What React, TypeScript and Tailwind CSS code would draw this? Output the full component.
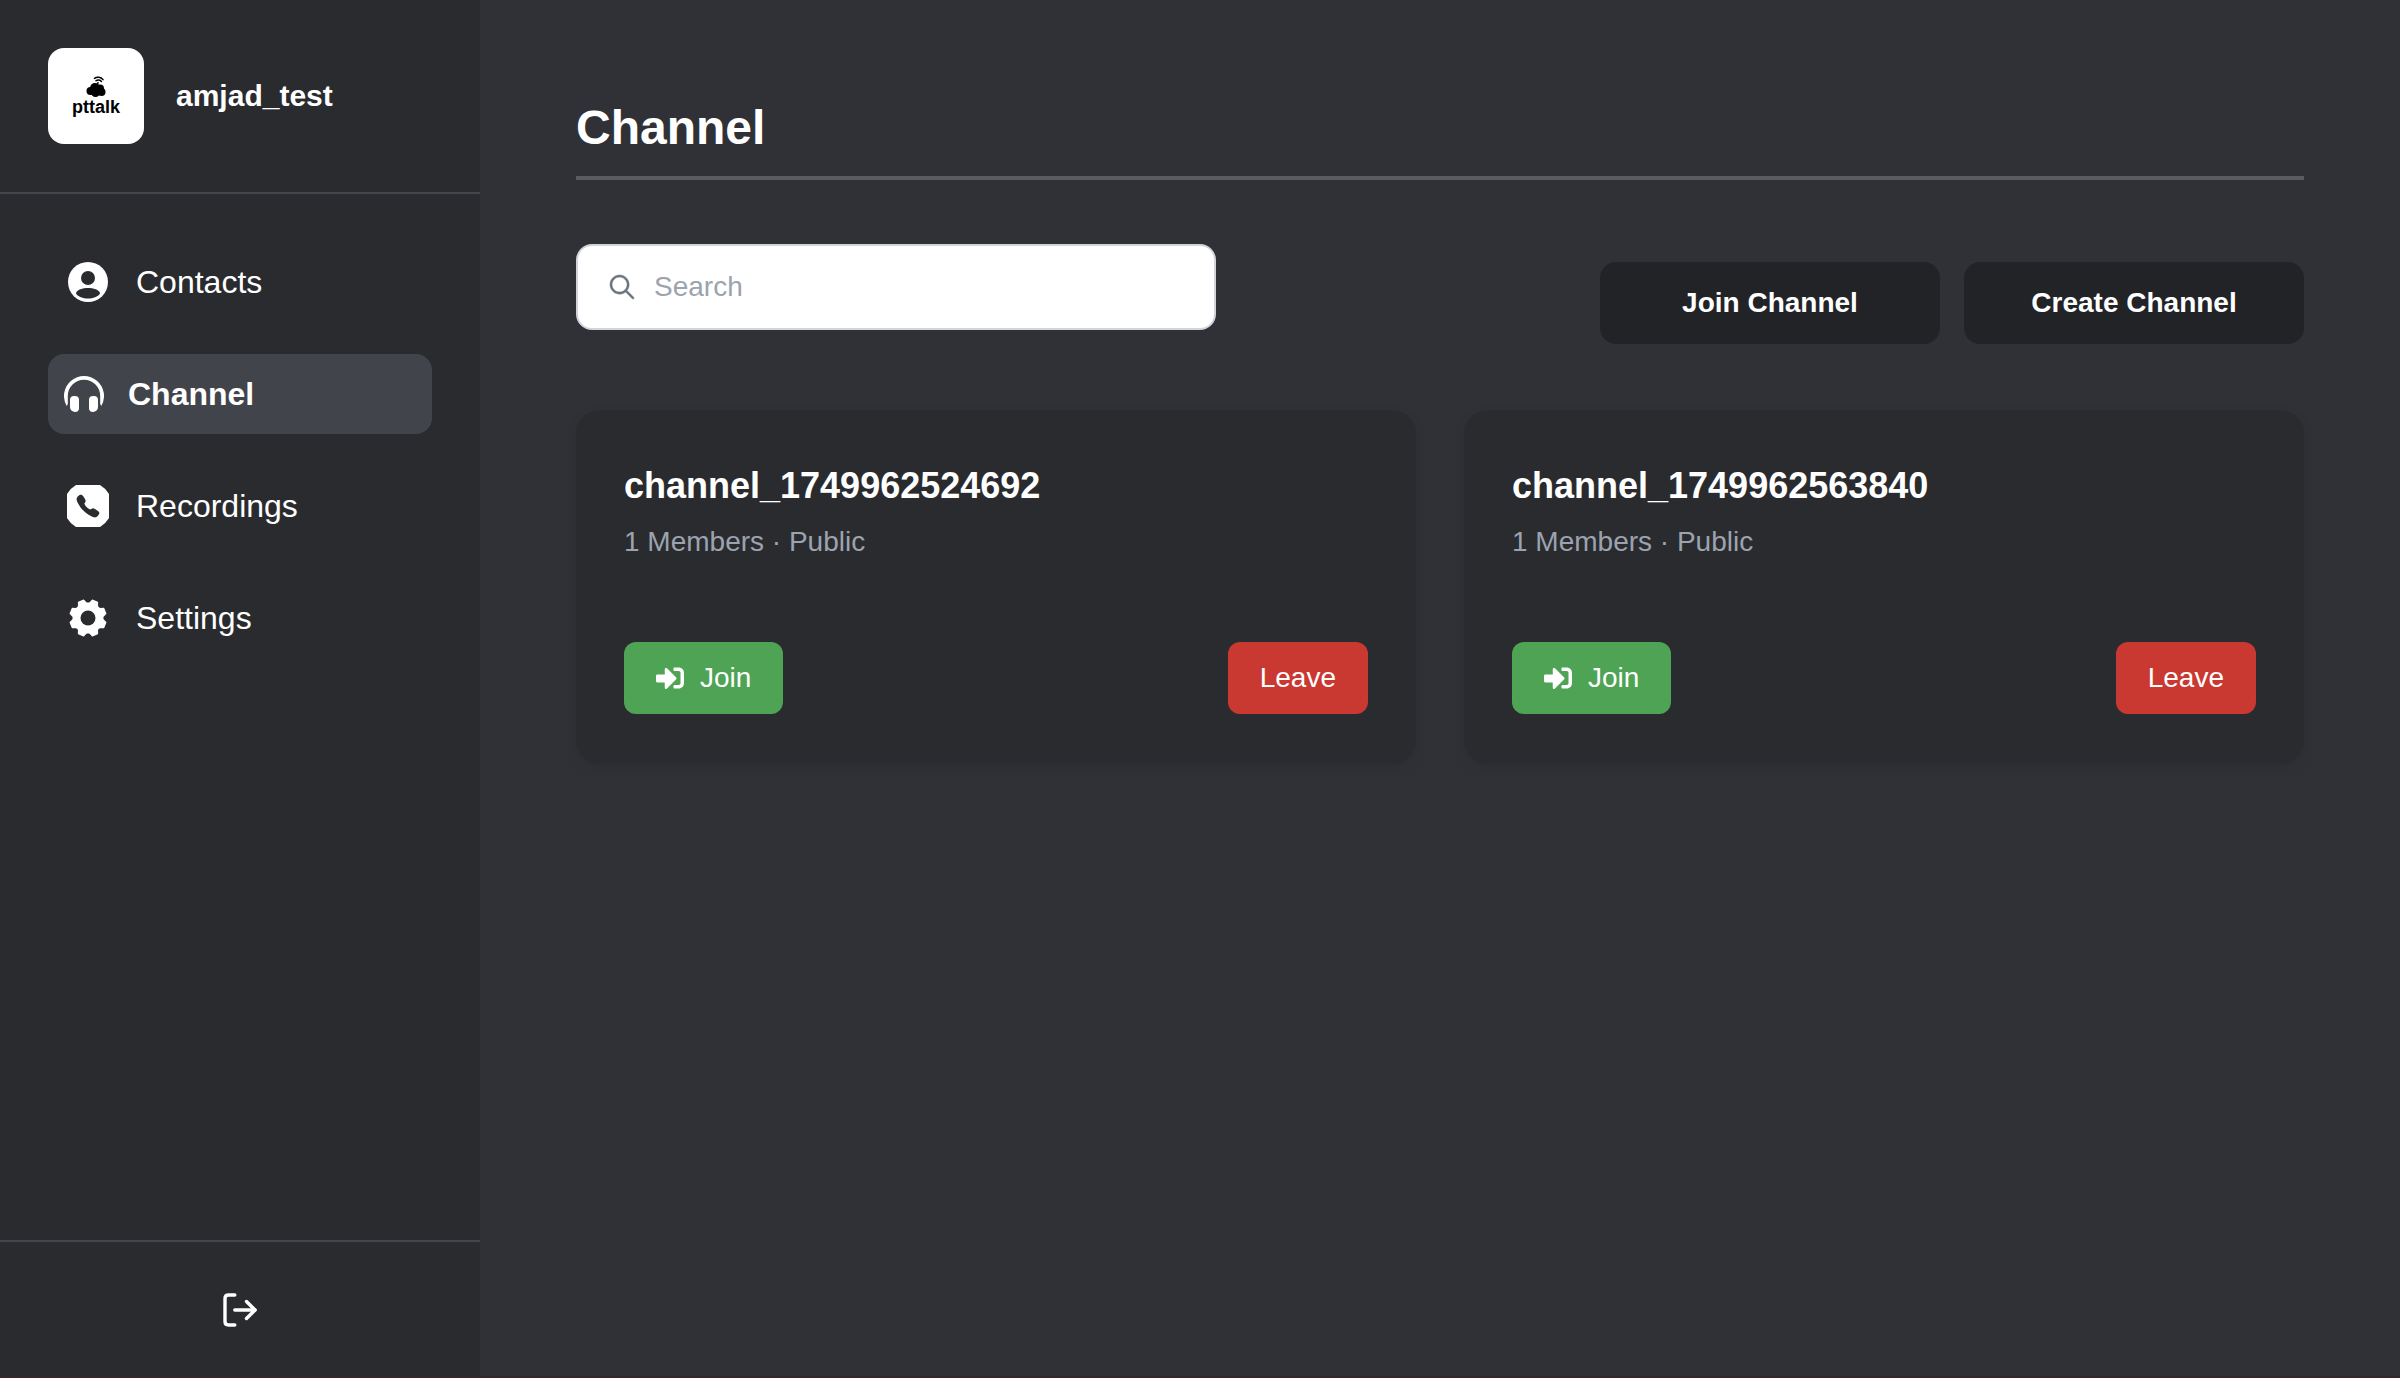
import { ReactNode } from "react";
import { FaSignInAlt } from "react-icons/fa";
import { IoIosSearch } from "react-icons/io";
import { IoCall } from "react-icons/io5";

const channels = [
  { name: "channel_1749962524692", members: 1, visibility: "Public" },
  { name: "channel_1749962563840", members: 1, visibility: "Public" },
];

function LogoMark() {
  return (
    <svg viewBox="0 0 20 22" className="h-[22px] w-5" fill="none" aria-hidden="true">
      <g fill="#000">
        <circle cx="9" cy="12" r="5" />
        <circle cx="4.500" cy="15" r="4" />
        <circle cx="14" cy="12.500" r="4" />
        <circle cx="15.500" cy="16" r="4" />
        <circle cx="9.500" cy="16.500" r="4.500" />
      </g>
      <g stroke="#000" strokeWidth="1.500" strokeLinecap="round">
        <path d="M8.500 2.400C11 .4 15 .8 17 3.600" />
        <path d="M10 4.800C11.600 3.400 14 3.700 15.400 5.400" />
        <path d="M12 6.600L11.600 8" />
      </g>
    </svg>
  );
}

function ContactsIcon() {
  return (
    <svg viewBox="-24 -24 48 48" className="size-12" aria-hidden="true">
      <circle r="20" fill="#fff" />
      <circle cy="-4" r="7" fill="#2a2b2f" />
      <path d="M-12 11.500C-11.500 7.500-5 6 0 6S11.500 7.500 12 11.500C10 15 5 16.500 0 16.500S-10 15-12 11.500Z" fill="#2a2b2f" />
    </svg>
  );
}

function HeadphonesIcon() {
  return (
    <svg viewBox="-20 -20 40 40" className="size-10" fill="#fff" aria-hidden="true">
      <path d="M-17.300 12A20 20 0 1 1 17.300 12L16.200 10V2A16.200 16.200 0 0 0-16.200 2V10Z" />
      <path d="M-10 2h1a4 4 0 0 1 4 4v8a4 4 0 0 1-4 4a5 5 0 0 1-5-5V6a4 4 0 0 1 4-4Z" />
      <path d="M10 2h-1a4 4 0 0 0-4 4v8a4 4 0 0 0 4 4a5 5 0 0 0 5-5V6a4 4 0 0 0-4-4Z" />
    </svg>
  );
}

function RecordingsIcon() {
  return (
    <span className="grid size-12 place-items-center">
      <svg viewBox="0 0 48 48" className="col-start-1 row-start-1 size-12" aria-hidden="true">
        <path d="M12 3H36A24 24 0 0 1 45 12V36A24 24 0 0 1 36 45H12A24 24 0 0 1 3 36V12A24 24 0 0 1 12 3Z" fill="#fff" />
      </svg>
      <IoCall className="col-start-1 row-start-1 size-[26px] text-[#2a2b2f]" aria-hidden="true" />
    </span>
  );
}

function SettingsIcon() {
  const teeth = [0, 45, 90, 135, 180, 225, 270, 315];
  return (
    <svg viewBox="-24 -24 48 48" className="size-12" aria-hidden="true">
      <circle r="15.500" fill="#fff" />
      <g fill="#fff" stroke="#fff" strokeWidth="1.200" strokeLinejoin="round">
        {teeth.map((a) => (
          <path key={a} transform={`rotate(${a + 22.5})`} d="M-5-13L-4-15L-2.800-18.200H2.800L4-15L5-13Z" />
        ))}
      </g>
      <circle r="7.500" fill="#2a2b2f" />
    </svg>
  );
}

function LogoutIcon() {
  return (
    <svg viewBox="-24 -24 48 48" className="size-12" fill="none" stroke="#fff" strokeWidth="3.400" strokeLinecap="round" strokeLinejoin="round" aria-hidden="true">
      <path d="M-5.200-14H-11.500Q-15-14-15-10.500V12.500Q-15 16-11.500 16H-5.200" />
      <path d="M-5.200 1H15" />
      <path d="M6.500-7.500L15 1L6.500 9.500" />
    </svg>
  );
}

function NavItem({ icon, label, active = false }: { icon: ReactNode; label: string; active?: boolean }) {
  return (
    <a
      href="#"
      aria-current={active ? "page" : undefined}
      className={
        active
          ? "flex h-20 items-center gap-6 rounded-2xl bg-[#42444c] px-4 text-[32px] leading-10 font-bold"
          : "flex h-20 items-center gap-6 rounded-2xl px-4 text-[32px] leading-10"
      }
    >
      {icon}
      {label}
    </a>
  );
}

function Sidebar() {
  return (
    <aside className="flex w-[480px] shrink-0 flex-col bg-[#2a2b2f]">
      <header className="flex items-center gap-8 border-b-2 border-[#44454d] p-12">
        <div className="flex size-24 flex-col items-center justify-center rounded-2xl bg-white">
          <LogoMark />
          <span className="text-[18px] leading-[18px] font-bold text-black">pttalk</span>
        </div>
        <span className="text-[30px] leading-10 font-bold">amjad_test</span>
      </header>
      <nav className="flex flex-1 flex-col gap-8 p-12">
        <NavItem icon={<ContactsIcon />} label="Contacts" />
        <NavItem icon={<HeadphonesIcon />} label="Channel" active />
        <NavItem icon={<RecordingsIcon />} label="Recordings" />
        <NavItem icon={<SettingsIcon />} label="Settings" />
      </nav>
      <footer className="flex justify-center border-t-2 border-[#44454d] py-[43px]">
        <button type="button" aria-label="Log out">
          <LogoutIcon />
        </button>
      </footer>
    </aside>
  );
}

function ChannelCard({ name, members, visibility }: { name: string; members: number; visibility: string }) {
  return (
    <article className="rounded-3xl bg-[#2a2b2f] px-12 pt-12 pb-[50px] shadow-[0_4px_12px_rgba(0,0,0,0.08)]">
      <h2 className="text-4xl leading-[56px] font-bold">{name}</h2>
      <p className="mt-2 text-[28px] leading-10 text-[#9ca3af]">
        {members} Members · {visibility}
      </p>
      <div className="mt-20 flex items-center justify-between text-[28px] leading-10">
        <button type="button" className="flex items-center gap-4 rounded-xl bg-[#4ea355] px-8 py-4">
          <FaSignInAlt className="size-7" aria-hidden="true" />
          Join
        </button>
        <button type="button" className="rounded-xl bg-[#c93931] px-8 py-4">
          Leave
        </button>
      </div>
    </article>
  );
}

export default function App() {
  return (
    <div className="flex min-h-screen border-b-2 border-[#32262f] bg-[#303136] font-['Liberation_Sans',Arial,sans-serif] text-white">
      <Sidebar />
      <main className="flex-1 p-24">
        <h1 className="border-b-4 border-[#5b5c60] pb-4 text-5xl leading-[64px] font-bold">Channel</h1>
        <div className="mt-16 flex items-center justify-between">
          <div className="pb-8">
            <label className="flex h-[86px] w-[640px] items-center gap-4 rounded-2xl border-2 border-[#d1d5db] bg-white px-7">
              <IoIosSearch className="size-8 shrink-0 stroke-[#6b7280] stroke-[8px] text-[#6b7280]" aria-hidden="true" />
              <input
                type="search"
                aria-label="Search"
                placeholder="Search"
                className="min-w-0 flex-1 bg-transparent text-[28px] leading-10 text-gray-900 outline-none placeholder:text-[#9ca3af]"
              />
            </label>
          </div>
          <div className="flex gap-6 text-[28px] leading-10 font-bold">
            <button type="button" className="h-[82px] w-[340px] rounded-2xl bg-[#222327]">
              Join Channel
            </button>
            <button type="button" className="h-[82px] w-[340px] rounded-2xl bg-[#222327]">
              Create Channel
            </button>
          </div>
        </div>
        <section className="mt-12 grid grid-cols-2 gap-12">
          {channels.map((c) => (
            <ChannelCard key={c.name} {...c} />
          ))}
        </section>
      </main>
    </div>
  );
}
